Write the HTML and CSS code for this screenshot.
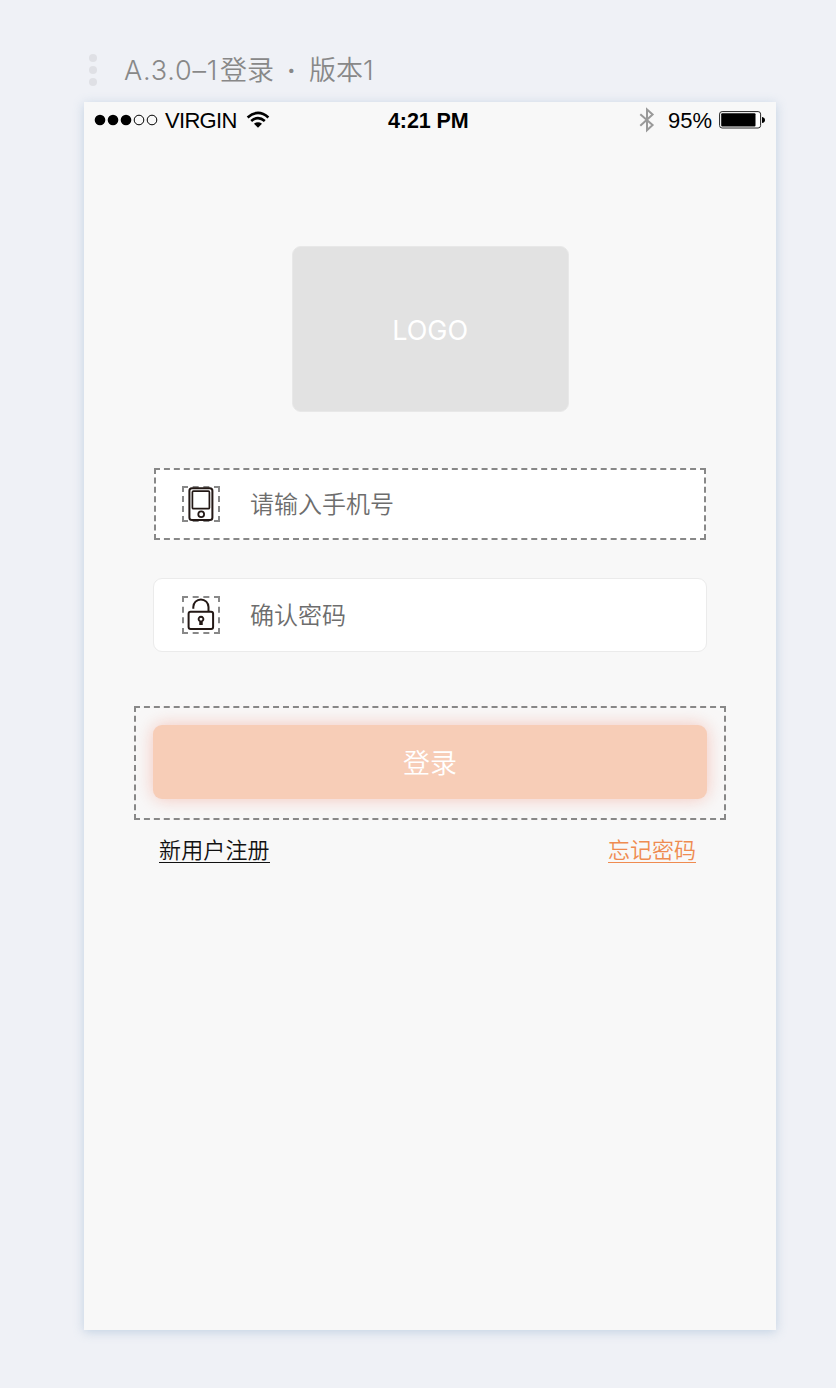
FILE: index.html
```html
<!DOCTYPE html>
<html lang="zh-CN">
<head>
<meta charset="utf-8">
<title>登录</title>
<link rel="stylesheet" href="styles.css">
</head>
<body>
<header class="board-title">
  <span class="handle"><i></i><i></i><i></i></span>
  <h1><span class="t-code">A.3.0–1</span><span class="t-name">登录</span><span class="t-dot">·</span><span class="t-version">版本1</span></h1>
</header>
<main class="screen">
  <div class="status">
    <div class="carrier">
      <svg class="signal" width="64" height="12" viewBox="0 0 64 12"><g fill="#000"><circle cx="6" cy="6" r="5.3"/><circle cx="19" cy="6" r="5.3"/><circle cx="32" cy="6" r="5.3"/></g><g fill="none" stroke="#000"><circle cx="45" cy="6" r="4.8"/><circle cx="58" cy="6" r="4.8"/></g></svg>
      <span class="network">VIRGIN</span>
      <svg class="wifi" width="24" height="18" viewBox="0 0 24 18"><g fill="none" stroke="#000" stroke-width="2.6"><path d="M1.6 6.4Q12-2.7 22.4 6.4"/><path d="M5.2 10Q12 4.1 18.8 10"/></g><path d="M8 12.7Q12 9.8 16 12.7L12 16.8Z"/></svg>
    </div>
    <time class="clock">4:21 PM</time>
    <div class="power">
      <svg width="16" height="26" viewBox="0 0 16 26"><path d="M1.3 7.2 13.6 18.1 8 23.2V2.5L13.6 7.5 1.3 18.8" fill="none" stroke="#999" stroke-width="2"/></svg>
      <span class="percent">95%</span>
      <svg class="battery" width="46" height="18" viewBox="0 0 46 18"><rect x=".6" y=".6" width="41" height="16.4" rx="2.5" fill="#fff" stroke="#222"/><rect x="2.2" y="2.2" width="34.3" height="13.2" rx="1"/><path d="M43 6Q46 6.5 46 9T43 12Z"/></svg>
    </div>
  </div>
  <div class="logo">LOGO</div>
  <form class="form">
    <label class="field selected">
      <span class="icon phone"><svg width="26" height="34" viewBox="0 0 26 34"><g fill="none" stroke="#231815"><rect x="1.4" y="1.2" width="23" height="31.8" rx="2.5" stroke-width="2"/><rect x="4.4" y="4.2" width="17" height="17.5" rx="1" stroke-width="1.7"/><circle cx="13.2" cy="27.2" r="2.9" stroke-width="1.8"/></g></svg></span>
      <span class="hint">请输入手机号</span>
    </label>
    <label class="field">
      <span class="icon lock"><svg width="28" height="34" viewBox="0 0 28 34"><g fill="none" stroke="#231815"><path d="M6.3 10.7V9A7.6 7.6 0 0 1 21.5 9V13.7" stroke-width="2"/><rect x="1.6" y="13.7" width="24.5" height="17.3" rx="2" stroke-width="2"/><path d="M13.2 26V23.4A2.4 2.4 0 1 1 14.8 23.4V26Z" stroke-width="1.9"/></g></svg></span>
      <span class="hint">确认密码</span>
    </label>
    <div class="submit-wrap"><button class="submit" type="button">登录</button></div>
    <nav class="links"><a class="register">新用户注册</a><a class="forgot">忘记密码</a></nav>
  </form>
</main>
</body>
</html>
```

FILE: styles.css
```css
* { box-sizing: border-box; }
body {
  margin: 0;
  min-height: 1388px;
  padding: 50px 60px 58px 84px;
  background: #eff1f6;
  font-family: "Liberation Sans", "Noto Sans CJK SC", sans-serif;
}
svg { display: block; flex: none; }
.board-title { display: flex; height: 52px; padding-left: 4.5px; }
.handle { display: flex; flex-direction: column; gap: 4px; width: 35.5px; padding-top: 4px; }
.handle i { width: 8px; height: 8px; border-radius: 50%; background: #dfe0e5; }
.board-title h1 {
  display: flex;
  margin: 0;
  padding-top: 1px;
  font: 350 27px/40px Inter, "Noto Sans CJK SC", sans-serif;
  color: #888;
  white-space: nowrap;
}
.t-code { width: 96px; letter-spacing: .8px; }
.t-name { width: 67px; }
.t-dot { width: 22px; font-weight: 600; }
.screen {
  height: 1228px;
  width: 692px;
  background: #f8f8f8;
  box-shadow: 0 2px 10px rgba(140, 170, 205, .45);
}
.status {
  display: grid;
  grid-template-columns: 304px 80px 308px;
  height: 36px;
  font-size: 22px;
  line-height: 34px;
  color: #000;
}
.carrier, .power { display: flex; align-items: center; }
.carrier { padding-left: 10px; }
.network { width: 73px; margin: 0 8px 0 7px; padding-top: 2px; letter-spacing: -.7px; white-space: nowrap; }
.clock { padding-top: 2px; font-weight: 700; font-size: 21.5px; letter-spacing: -.1px; white-space: nowrap; }
.power { justify-content: flex-end; padding-right: 11px; }
.percent { width: 44px; margin: 0 7px 0 13px; padding-top: 2px; }
.logo {
  display: flex;
  align-items: center;
  justify-content: center;
  width: 277px;
  height: 166px;
  margin: 108px auto 0 207.6px;
  padding-top: 3px;
  border: 1px solid #e8e8e8;
  border-radius: 9px;
  background: #e2e2e2;
  color: #fff;
  font: 27px/40px Inter, sans-serif;
}
.form { display: flex; flex-direction: column; padding: 56px 50px 0; }
.field {
  display: flex;
  align-items: center;
  height: 74px;
  margin: 0 19px;
  padding-left: 28px;
  border: 1px solid #ebebeb;
  border-radius: 9px;
  background: #fff;
  color: #6d6d6d;
  font-size: 24px;
  font-weight: 350;
}
.field.selected {
  height: 72px;
  margin: 0 20px 38px;
  padding-left: 26px;
  border: 2px dashed #888;
  border-radius: 0;
}
.hint { padding-bottom: 4px; }
.icon {
  display: flex;
  align-items: center;
  justify-content: center;
  width: 38px;
  height: 38px;
  margin-right: 30px;
  border: 2px dashed #888;
}
.icon.phone { height: 36px; }
.submit-wrap { height: 114px; margin-top: 54px; padding: 17px; border: 2px dashed #888; }
.submit {
  display: block;
  width: 554px;
  height: 74px;
  padding: 0;
  border: 0;
  border-radius: 9px;
  background: #f7cdb7;
  box-shadow: 0 0 18px rgba(243, 155, 137, .55);
  color: #fff;
  font: 350 27px/74px "Noto Sans CJK SC", sans-serif;
}
.links {
  display: flex;
  justify-content: space-between;
  padding: 10px 30px 0 25px;
  font: 350 22px/36px "Noto Sans CJK SC", sans-serif;
}
.links a { height: 32.5px; border-bottom: 1.5px solid; }
.register { color: #111; letter-spacing: .15px; }
.forgot { color: #ef8b50; }
```
